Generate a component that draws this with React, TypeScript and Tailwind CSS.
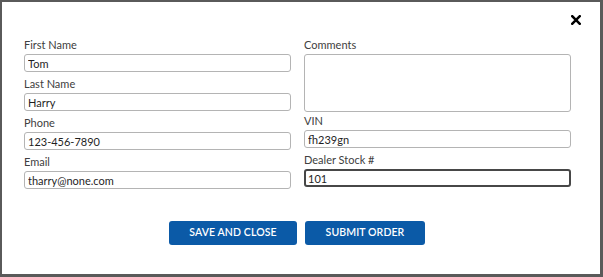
import { useState } from "react";

function Field({
  label,
  value,
  focused = false,
}: {
  label: string;
  value: string;
  focused?: boolean;
}) {
  const [text, setText] = useState(value);
  return (
    <div className="flex flex-col">
      <label className="h-[16px] pt-[1px] text-[11px] leading-[16px] text-[#404040]">
        {label}
      </label>
      <input
        value={text}
        onChange={(e) => setText(e.target.value)}
        className={
          focused
            ? "mt-[2px] h-[18px] w-full rounded-[3px] border-2 border-[#474747] bg-white px-[2px] text-[11px] text-[#1f1f1f] outline-none"
            : "mt-[2px] h-[18px] w-full rounded-[3px] border border-[#b4b4b4] bg-white px-[3px] text-[11px] text-[#1f1f1f] outline-none"
        }
      />
    </div>
  );
}

export default function App() {
  const [comments, setComments] = useState("");

  return (
    <div
      className="h-[277px] w-[603px] border-t-2 border-r-[3px] border-b-[3px] border-l-2 border-[#5a5a5a] bg-white"
      style={{ fontFamily: "Lato, 'Noto Sans', sans-serif" }}
    >
      <div className="flex h-[34px] justify-end pt-[12px] pr-[18px]">
        <button aria-label="Close" className="h-[11px] w-[11px] text-black">
          <svg viewBox="0 0 10 10" className="h-[10px] w-[10px]">
            <path
              d="M1.2 1.2 L8.8 8.8 M8.8 1.2 L1.2 8.8"
              stroke="currentColor"
              strokeWidth="2.5"
              strokeLinecap="square"
            />
          </svg>
        </button>
      </div>

      <div className="grid grid-cols-[267px_267px] gap-x-[13px] pl-[22px]">
        <div className="flex flex-col gap-[3px]">
          <Field label="First Name" value="Tom" />
          <Field label="Last Name" value="Harry" />
          <Field label="Phone" value="123-456-7890" />
          <Field label="Email" value="tharry@none.com" />
        </div>

        <div className="flex flex-col">
          <label className="h-[16px] pt-[1px] text-[11px] leading-[16px] text-[#404040]">
            Comments
          </label>
          <textarea
            value={comments}
            onChange={(e) => setComments(e.target.value)}
            className="mt-[2px] h-[58px] w-full resize-none rounded-[3px] border border-[#b4b4b4] bg-white px-[3px] text-[11px] outline-none"
          />
          <Field label="VIN" value="fh239gn" />
          <div className="mt-[3px]">
            <Field label="Dealer Stock #" value="101" focused />
          </div>
        </div>
      </div>

      <div className="mt-[32px] flex justify-center gap-[8px] pr-[8px]">
        <button className="h-[24px] w-[128px] rounded-[3px] bg-[#0b5aa7] text-[10.5px] font-semibold tracking-[0.1px] text-white">
          SAVE AND CLOSE
        </button>
        <button className="h-[24px] w-[120px] rounded-[3px] bg-[#0b5aa7] text-[10.5px] font-semibold tracking-[0.1px] text-white">
          SUBMIT ORDER
        </button>
      </div>
    </div>
  );
}
